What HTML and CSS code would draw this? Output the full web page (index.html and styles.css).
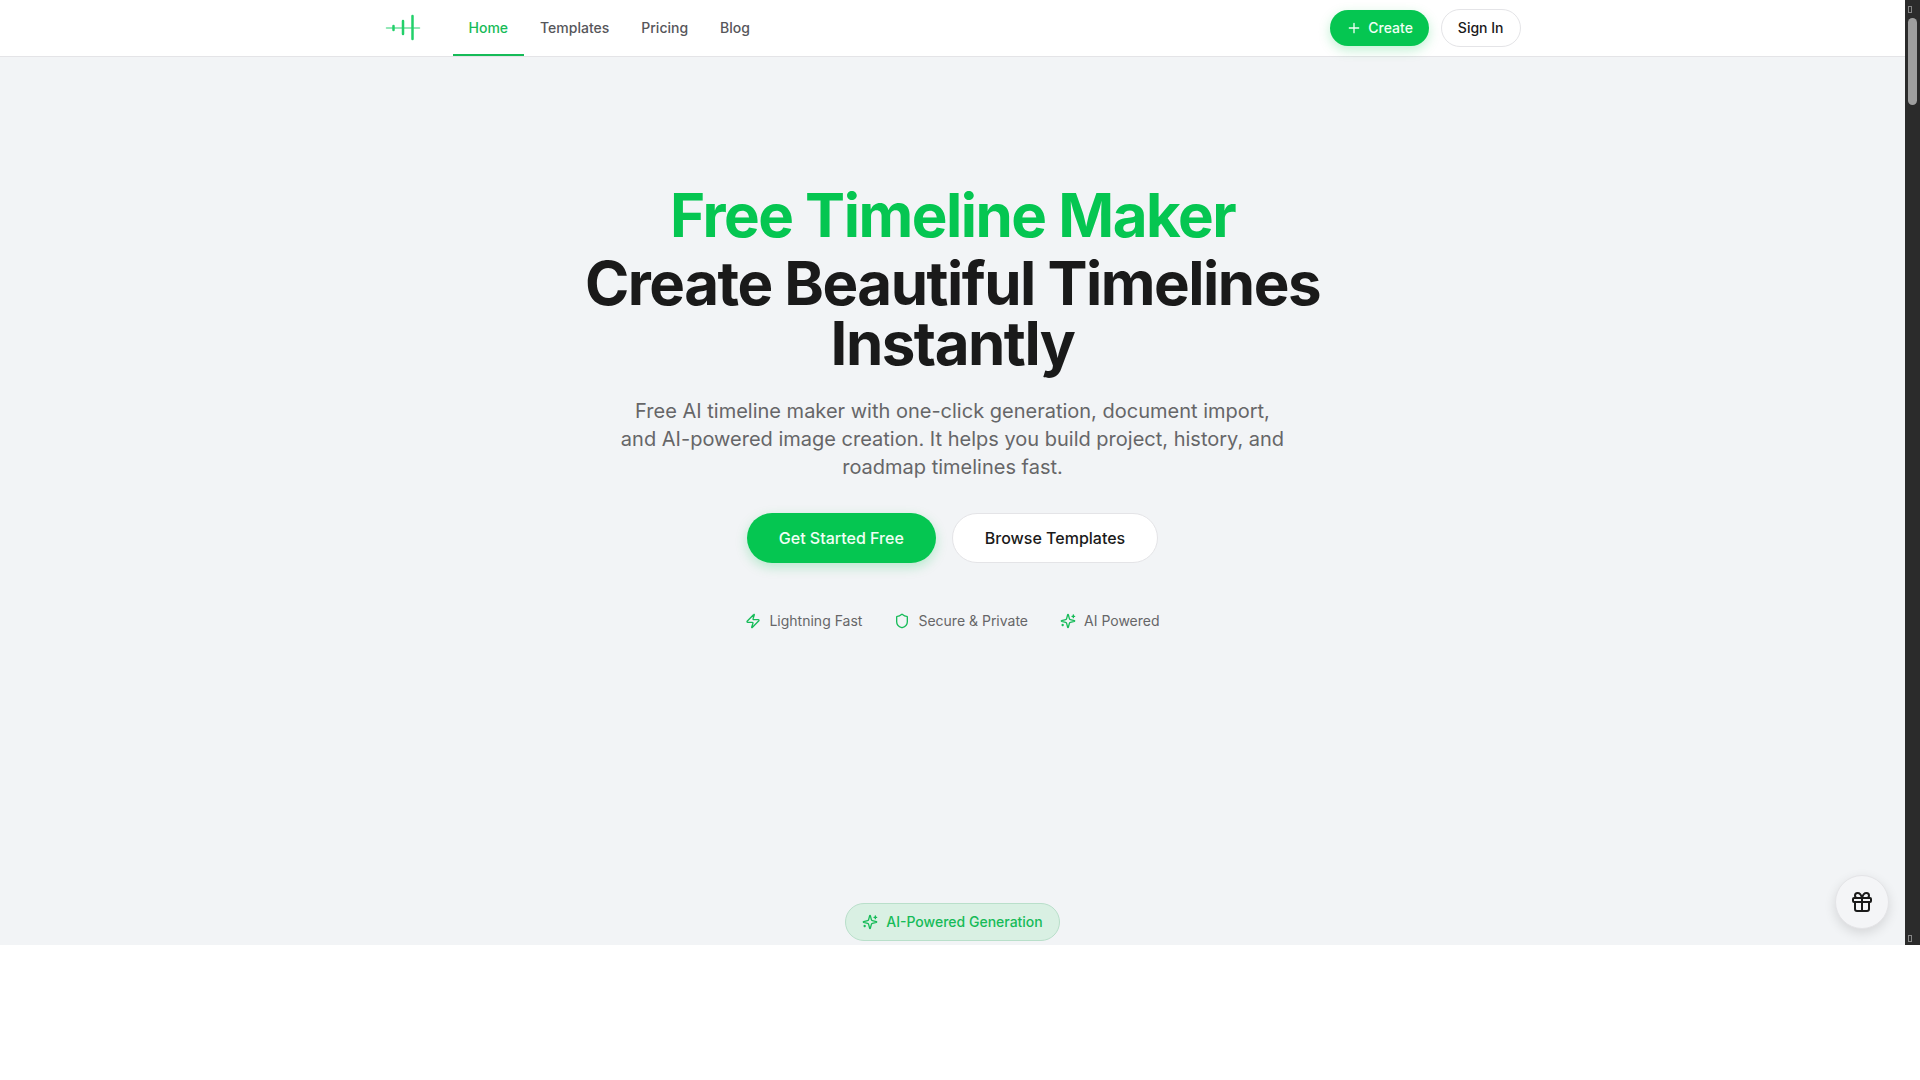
FILE: index.html
```html
<!DOCTYPE html>
<html lang="en">
<head>
    <meta charset="UTF-8">
    <meta name="viewport" content="width=device-width, initial-scale=1.0">
    <title>Free Timeline Maker</title>
    <link rel="stylesheet" href="styles.css">
</head>
<body>
    <!-- shared icons -->
    <svg class="sprite" aria-hidden="true">
        <symbol id="icon-sparkles" viewBox="0 0 24 24">
            <path d="M9.937 15.5A2 2 0 0 0 8.5 14.063l-6.135-1.582a.5.5 0 0 1 0-.962L8.5 9.936A2 2 0 0 0 9.937 8.5l1.582-6.135a.5.5 0 0 1 .963 0L14.063 8.5A2 2 0 0 0 15.5 9.937l6.135 1.581a.5.5 0 0 1 0 .964L15.5 14.063a2 2 0 0 0-1.437 1.437l-1.582 6.135a.5.5 0 0 1-.963 0z"/>
            <path d="M20 3v4M22 5h-4M4 17v2M5 18H3"/>
        </symbol>
    </svg>

    <div class="window">
        <div class="page">
            <header class="header">
                <div class="container header-inner">
                    <a class="logo" href="/" aria-label="Timeline Maker">
                        <svg viewBox="0 0 36 36" fill="none" stroke="currentColor" stroke-linecap="round">
                            <path d="M1.5 18h33" stroke-width="1.5" opacity="0.65"/>
                            <path d="M8.5 16v4" stroke-width="2.5"/>
                            <path d="M18 11v13" stroke-width="2.5"/>
                            <path d="M27.5 6v23" stroke-width="2.5"/>
                        </svg>
                    </a>
                    <nav class="nav">
                        <a class="active" href="/">Home</a>
                        <a href="/templates">Templates</a>
                        <a href="/pricing">Pricing</a>
                        <a href="/blog">Blog</a>
                    </nav>
                    <div class="actions">
                        <button class="btn btn-small btn-primary" type="button">
                            <svg class="icon" viewBox="0 0 24 24"><path d="M5 12h14M12 5v14"/></svg>
                            Create
                        </button>
                        <button class="btn btn-small btn-outline" type="button">Sign In</button>
                    </div>
                </div>
            </header>

            <main>
                <section class="hero">
                    <h1>
                        <span class="highlight">Free Timeline Maker</span>
                        <span>Create Beautiful Timelines Instantly</span>
                    </h1>
                    <p class="lead">Free AI timeline maker with one-click generation, document import, and AI-powered image creation. It helps you build project, history, and roadmap timelines fast.</p>
                    <div class="hero-buttons">
                        <button class="btn btn-large btn-primary" type="button">Get Started Free</button>
                        <button class="btn btn-large btn-outline" type="button">Browse Templates</button>
                    </div>
                    <ul class="features">
                        <li>
                            <svg class="icon" viewBox="0 0 24 24"><path d="M4 14a1 1 0 0 1-.78-1.63l9.9-10.2a.5.5 0 0 1 .86.46l-1.92 6.02A1 1 0 0 0 13 10h7a1 1 0 0 1 .78 1.63l-9.9 10.2a.5.5 0 0 1-.86-.46l1.92-6.02A1 1 0 0 0 11 14z"/></svg>
                            Lightning Fast
                        </li>
                        <li>
                            <svg class="icon" viewBox="0 0 24 24"><path d="M20 13c0 5-3.5 7.5-7.66 8.95a1 1 0 0 1-.67-.01C7.5 20.5 4 18 4 13V6a1 1 0 0 1 1-1c2 0 4.5-1.2 6.24-2.72a1.17 1.17 0 0 1 1.52 0C14.51 3.81 17 5 19 5a1 1 0 0 1 1 1z"/></svg>
                            Secure &amp; Private
                        </li>
                        <li>
                            <svg class="icon"><use href="#icon-sparkles"/></svg>
                            AI Powered
                        </li>
                    </ul>
                </section>

                <section class="generation">
                    <div class="pill">
                        <svg class="icon"><use href="#icon-sparkles"/></svg>
                        AI-Powered Generation
                    </div>
                </section>
            </main>

            <button class="gift" type="button" aria-label="Rewards">
                <svg class="icon" viewBox="0 0 24 24"><rect x="3" y="8" width="18" height="4" rx="1"/><path d="M12 8v13M19 12v7a2 2 0 0 1-2 2H7a2 2 0 0 1-2-2v-7M7.5 8a2.5 2.5 0 0 1 0-5A4.8 8 0 0 1 12 8a4.8 8 0 0 1 4.5-5 2.5 2.5 0 0 1 0 5"/></svg>
            </button>
        </div>

        <div class="scrollbar" aria-hidden="true">
            <span class="arrow"></span>
            <div class="track"><div class="thumb"></div></div>
            <span class="arrow"></span>
        </div>
    </div>
</body>
</html>
```

FILE: styles.css
```css
* {
    box-sizing: border-box;
}
body {
    margin: 0;
    background: #fff;
    color: #1a1a1a;
    font-family: Inter, "Liberation Sans", sans-serif;
    font-size: 14px;
    line-height: 20px;
}
a {
    color: inherit;
    text-decoration: none;
}
.sprite {
    display: none;
}
.icon {
    width: 16px;
    height: 16px;
    flex: none;
    fill: none;
    stroke: currentColor;
    stroke-width: 2;
    stroke-linecap: round;
    stroke-linejoin: round;
}

/* window with its scrollbar */
.window {
    display: flex;
    height: 87.5vh;
}
.page {
    flex: 1;
    position: relative;
    overflow: hidden;
    background: #f2f4f6;
}
.scrollbar {
    display: flex;
    flex-direction: column;
    align-items: center;
    width: 15px;
    padding: 6px 0 3px;
    background: #2b2b2b;
}
.track {
    flex: 1;
    padding-top: 5px;
}
.thumb {
    width: 9px;
    height: 87px;
    border-radius: 5px;
    background: #9f9f9f;
}
.arrow {
    width: 4px;
    height: 7px;
    margin-right: 6px;
    border: 1px solid #858585;
}

/* header */
.header {
    background: #fff;
    border-bottom: 1px solid #e4e4e7;
}
.container {
    max-width: 1200px;
    margin: 0 auto;
    padding: 0 32px;
}
.header-inner {
    display: flex;
    align-items: center;
    height: 56px;
}
.logo {
    width: 36px;
    height: 36px;
    margin-right: 32px;
    color: #22d06a;
}
.logo svg {
    display: block;
}
.nav {
    display: flex;
    align-self: stretch;
}
.nav a {
    display: flex;
    align-items: center;
    padding: 2px 16px 0;
    border-bottom: 2px solid transparent;
    color: #56565a;
    font-weight: 500;
}
.nav a.active {
    color: #16bb58;
    border-color: #16bb58;
}
.actions {
    display: flex;
    align-items: center;
    gap: 12px;
    margin-left: auto;
}

/* buttons */
.btn {
    display: flex;
    align-items: center;
    justify-content: center;
    gap: 6px;
    border: 0;
    border-radius: 999px;
    font-family: inherit;
    font-weight: 500;
    cursor: pointer;
}
.btn-small {
    padding: 8px 16px;
    font-size: 14px;
    line-height: 20px;
}
.btn-large {
    padding: 13px 32px;
    font-size: 16px;
    line-height: 24px;
}
.btn-primary {
    background: #05c651;
    color: #f0fff5;
    box-shadow: 0 4px 12px rgba(5, 198, 81, 0.25);
}
.btn-outline {
    background: #fff;
    color: #1a1a1a;
    border: 1px solid #e4e4e7;
}
.btn-large.btn-outline {
    padding: 12px 32px;
}

/* hero */
.hero {
    display: flex;
    flex-direction: column;
    align-items: center;
    padding: 128px 32px;
    text-align: center;
}
h1 {
    max-width: 768px;
    margin: 0;
    font-size: 60px;
    line-height: 60px;
    font-weight: 700;
    letter-spacing: -0.025em;
}
h1 span {
    display: block;
}
.highlight {
    margin-bottom: 8px;
    color: #05c651;
}
.lead {
    max-width: 672px;
    margin: 24px 0 32px;
    color: #666668;
    font-size: 20px;
    line-height: 28px;
}
.hero-buttons {
    display: flex;
    gap: 16px;
}
.features {
    display: flex;
    gap: 32px;
    margin: 48px 0 0;
    padding: 0;
    list-style: none;
    color: #666668;
}
.features li {
    display: flex;
    align-items: center;
    gap: 8px;
}
.features .icon {
    color: #16bb58;
}

/* next section */
.generation {
    display: flex;
    justify-content: center;
    padding: 144px 32px;
}
.pill {
    display: flex;
    align-items: center;
    gap: 8px;
    padding: 8px 16px;
    border: 1px solid #b9dfca;
    border-radius: 999px;
    background: #d9f0e3;
    color: #16bb58;
    font-weight: 500;
}

/* floating button */
.gift {
    position: absolute;
    right: 16px;
    bottom: 16px;
    padding: 14px;
    border: 1px solid #e4e4e7;
    border-radius: 50%;
    background: #f4f5f7;
    color: #1a1a1a;
    box-shadow: 0 4px 12px rgba(0, 0, 0, 0.12);
    cursor: pointer;
}
.gift .icon {
    display: block;
    width: 24px;
    height: 24px;
}
```
